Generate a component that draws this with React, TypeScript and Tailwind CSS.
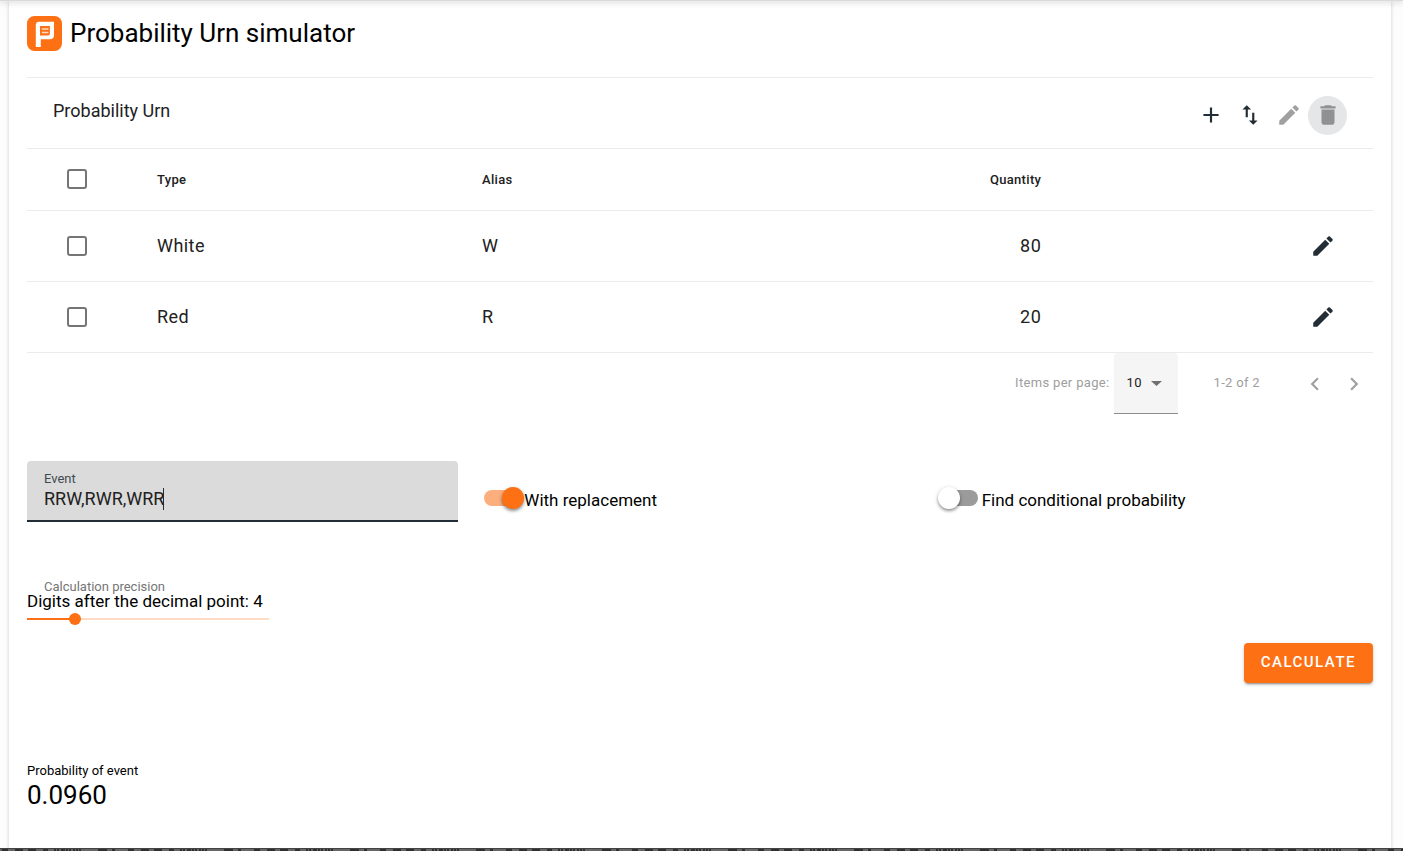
import { useState } from "react";
import type { ReactNode } from "react";
import { MdAdd, MdChevronLeft, MdChevronRight, MdDelete, MdEdit, MdSwapVert } from "react-icons/md";

const rows = [
  { type: "White", alias: "W", quantity: 80 },
  { type: "Red", alias: "R", quantity: 20 },
];

function Logo() {
  return (
    <svg viewBox="0 0 35 35" className="size-[35px] shrink-0" aria-hidden="true">
      <rect width="35" height="35" rx="7.5" fill="#fd7014" />
      <path d="M8.8 31V9.2Q8.8 5.8 12.2 5.8H27V19.2Q27 23.3 22.9 23.3H13.8V31Z" fill="#fff" />
      <path d="M13 10H22.9V17.8Q22.9 19.6 21.1 19.6H13Z" fill="#fd7014" />
      <path d="M14.8 13H21.4M14.8 16.5H21.4" stroke="#fff" strokeWidth="1.6" opacity=".75" />
    </svg>
  );
}

const tones = {
  normal: "text-[#222d35]",
  muted: "text-[#a0a0a0]",
  highlighted: "bg-[#e4e6e7] text-[#8f9192]",
};

function IconButton({ label, tone = "normal", children }: { label: string; tone?: keyof typeof tones; children: ReactNode }) {
  return (
    <button
      type="button"
      aria-label={label}
      disabled={tone !== "normal"}
      className={`flex size-[39px] items-center justify-center rounded-full text-[26px] ${tones[tone]}`}
    >
      {children}
    </button>
  );
}

function TickBox({ label }: { label: string }) {
  return (
    <input
      type="checkbox"
      aria-label={label}
      className="ml-10 block size-5 appearance-none rounded-[3px] border-2 border-[#757575] checked:bg-[#fd7014]"
    />
  );
}

function Toggle({ label, initial }: { label: string; initial: boolean }) {
  const [on, setOn] = useState(initial);
  return (
    <label className="flex h-[60px] items-center gap-1 pt-[18px] text-[17px] leading-6 text-black">
      <input
        type="checkbox"
        role="switch"
        checked={on}
        onChange={(e) => setOn(e.target.checked)}
        className="relative -mt-1 h-4 w-9 shrink-0 appearance-none rounded-full bg-[#9b9b9b] before:absolute before:-top-[3px] before:-left-1 before:size-[22px] before:rounded-full before:bg-white before:shadow-[0_2px_3px_rgba(0,0,0,0.35),0_1px_5px_rgba(0,0,0,0.15)] checked:bg-[#fcaf7d] checked:before:left-[18px] checked:before:bg-[#fd7014]"
      />
      <span>{label}</span>
    </label>
  );
}

function FooterPattern() {
  return (
    <footer className="h-[3px] shrink-0 bg-[#666]">
      <svg className="block h-[3px] w-full" aria-hidden="true">
        <defs>
          <pattern id="marks" width="126" height="3" x="-14" patternUnits="userSpaceOnUse">
            <path
              d="M0 2h3M16 2h6M29 2h8M42 2h8M57 2h5M69 1v2M72 1v2M75 2h4M81 1v2M84 1v2M87 2h2M90 2h2M93 2h2M112 2h9"
              stroke="#303030"
              strokeWidth="2"
              fill="none"
            />
          </pattern>
        </defs>
        <rect width="100%" height="3" fill="url(#marks)" />
        <rect width="100%" height="1" fill="#444" />
      </svg>
    </footer>
  );
}

export default function App() {
  const [event, setEvent] = useState("RRW,RWR,WRR");
  const [digits, setDigits] = useState(4);

  return (
    <div className="flex min-h-screen flex-col bg-[#fdfdfd] font-[Roboto,sans-serif] text-black">
      <div className="relative z-10 h-px bg-[#dadada] shadow-[0_0_6px_1px_rgba(0,0,0,0.22)]" />
      <main className="mr-3 ml-[9px] grow bg-white px-[18px] pb-9 shadow-[0_1px_4px_rgba(0,0,0,0.2)]">
        <header className="flex h-[76px] items-start gap-2 pt-[15px]">
          <Logo />
          <h1 className="text-[26px] leading-[35px]">Probability Urn simulator</h1>
        </header>

        <section className="border-t border-[#ebebeb]">
          <div className="flex h-[71px] items-center justify-between border-b border-[#ebebeb] px-[26px] pt-1">
            <h2 className="pb-2 text-[18px] leading-6 text-[#212121]">Probability Urn</h2>
            <div className="flex">
              <IconButton label="Add"><MdAdd /></IconButton>
              <IconButton label="Import or export"><MdSwapVert /></IconButton>
              <IconButton label="Edit" tone="muted"><MdEdit /></IconButton>
              <IconButton label="Delete" tone="highlighted"><MdDelete /></IconButton>
            </div>
          </div>

          <table className="w-full table-fixed border-collapse text-left text-[#212121]">
            <colgroup>
              <col className="w-[112px]" />
              <col className="w-[24%]" />
              <col className="w-[24%]" />
              <col className="w-[20%]" />
              <col />
            </colgroup>
            <thead>
              <tr className="h-[61px] border-b border-[#ebebeb] text-[13px] tracking-wide">
                <th><TickBox label="Select all" /></th>
                <th className="px-[18px] font-medium">Type</th>
                <th className="px-5 font-medium">Alias</th>
                <th className="px-[13px] text-right font-medium">Quantity</th>
                <th />
              </tr>
            </thead>
            <tbody>
              {rows.map((row) => (
                <tr key={row.alias} className="h-[71px] border-b border-[#ebebeb] text-[18px] tracking-wide">
                  <td><TickBox label={`Select ${row.type}`} /></td>
                  <td className="px-[18px]">{row.type}</td>
                  <td className="px-5">{row.alias}</td>
                  <td className="px-[13px] text-right">{row.quantity}</td>
                  <td className="pr-[37px]">
                    <button type="button" aria-label={`Edit ${row.type}`} className="ml-auto block text-[26px] text-[#222d35]">
                      <MdEdit />
                    </button>
                  </td>
                </tr>
              ))}
            </tbody>
          </table>

          <div className="flex h-[61px] items-center justify-end text-[13px] tracking-wide text-[#9e9e9e]">
            <label htmlFor="page-size">Items per page:</label>
            <div className="relative ml-1 h-full w-16">
              <select
                id="page-size"
                defaultValue="10"
                className="h-full w-full appearance-none rounded-t border-b border-[#8c8c8c] bg-[#f5f5f5] pl-[13px] tracking-wide text-[#212121]"
              >
                <option>5</option>
                <option>10</option>
                <option>20</option>
              </select>
              <svg viewBox="0 0 11 5" className="pointer-events-none absolute top-7 right-4 h-[5px] w-[11px]" aria-hidden="true">
                <path d="M0 0h11L5.5 5z" fill="#707070" />
              </svg>
            </div>
            <span className="ml-9">1-2 of 2</span>
            <div className="ml-[35px] flex pt-0.5">
              <IconButton label="Previous page" tone="muted"><MdChevronLeft /></IconButton>
              <IconButton label="Next page" tone="muted"><MdChevronRight /></IconButton>
            </div>
          </div>
        </section>

        <form onSubmit={(e) => e.preventDefault()}>
          <div className="mt-[47px] grid grid-cols-3 gap-[26px]">
            <div className="relative flex h-[61px] flex-col rounded-t border-b-2 border-[#222d35] bg-[#dbdbdb] px-[17px] pt-[9px]">
              <label htmlFor="event" className="text-[13px] leading-[17px] text-[#414a50]">Event</label>
              <input
                id="event"
                value={event}
                onChange={(e) => setEvent(e.target.value)}
                className="w-full bg-transparent text-[18px] leading-6 text-[#212121] caret-transparent outline-none"
              />
              <span className="absolute top-[27px] left-[136px] h-[22px] w-px bg-[#222d35]" aria-hidden="true" />
            </div>
            <Toggle label="With replacement" initial />
            <Toggle label="Find conditional probability" initial={false} />
          </div>

          <div className="mt-[57px] w-[242px]">
            <label htmlFor="precision" className="block">
              <span className="block pl-[17px] text-[13px] leading-4 text-[#757575]">Calculation precision</span>
              <span className="-mt-1.5 block text-[17px] leading-6 whitespace-nowrap">Digits after the decimal point: {digits}</span>
            </label>
            <div className="relative flex h-3 items-center">
              <div className="h-0.5 w-full bg-[#ffdbc4]">
                <div className="h-full bg-[#fd7014]" style={{ width: `${digits * 5}%` }} />
              </div>
              <input
                id="precision"
                type="range"
                min={0}
                max={20}
                value={digits}
                onChange={(e) => setDigits(Number(e.target.value))}
                className="absolute -inset-x-1.5 top-0 h-3 appearance-none bg-transparent [&::-webkit-slider-thumb]:size-3 [&::-webkit-slider-thumb]:appearance-none [&::-webkit-slider-thumb]:rounded-full [&::-webkit-slider-thumb]:bg-[#fd7014]"
              />
            </div>
          </div>

          <div className="mt-[18px] flex justify-end">
            <button
              type="submit"
              className="h-10 rounded bg-[#fd7014] px-[17px] text-[15px] font-medium tracking-widest text-white uppercase shadow-[0_3px_1px_-2px_rgba(0,0,0,0.2),0_2px_2px_rgba(0,0,0,0.14),0_1px_5px_rgba(0,0,0,0.12)]"
            >
              Calculate
            </button>
          </div>
        </form>

        <section className="mt-[79px]">
          <h3 className="text-[13px] leading-[17px]">Probability of event</h3>
          <output className="block text-[26px] leading-8">0.0960</output>
        </section>
      </main>
      <FooterPattern />
    </div>
  );
}
